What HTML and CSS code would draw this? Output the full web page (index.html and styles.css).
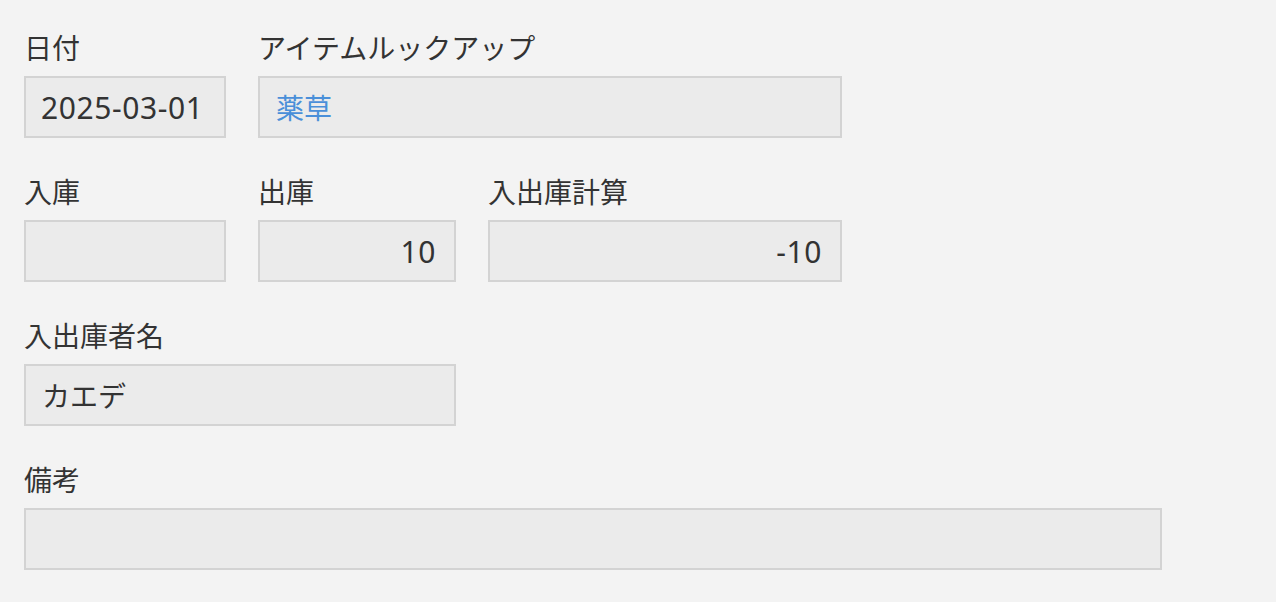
FILE: index.html
```html
<!DOCTYPE html>
<html lang="ja">
<head>
<meta charset="utf-8">
<link rel="stylesheet" href="styles.css">
</head>
<body>
<div class="form">
  <div class="row">
    <div class="field">
      <div class="label">日付</div>
      <div class="box w202 latin">2025-03-01</div>
    </div>
    <div class="field">
      <div class="label">アイテムルックアップ</div>
      <div class="box w584 link">薬草</div>
    </div>
  </div>
  <div class="row">
    <div class="field">
      <div class="label">入庫</div>
      <div class="box w202 num latin"></div>
    </div>
    <div class="field">
      <div class="label">出庫</div>
      <div class="box w198 num latin">10</div>
    </div>
    <div class="field">
      <div class="label">入出庫計算</div>
      <div class="box w354 num latin">-10</div>
    </div>
  </div>
  <div class="row">
    <div class="field">
      <div class="label">入出庫者名</div>
      <div class="box w432">カエデ</div>
    </div>
  </div>
  <div class="row">
    <div class="field">
      <div class="label">備考</div>
      <div class="box w1138"></div>
    </div>
  </div>
</div>
</body>
</html>
```

FILE: styles.css
```css
html, body {
  margin: 0;
  background: #f3f3f3;
}
body {
  font-family: "Noto Sans CJK JP", "Noto Sans", sans-serif;
  color: #333333;
}
.form {
  padding: 27px 24px 0 24px;
  display: flex;
  flex-direction: column;
  gap: 33px;
}
.row {
  display: flex;
  gap: 32px;
}
.field {
  display: flex;
  flex-direction: column;
}
.label {
  font-size: 28px;
  line-height: 40px;
  height: 40px;
  margin-bottom: 9px;
  white-space: nowrap;
}
.box {
  box-sizing: border-box;
  height: 62px;
  border: 2px solid #d3d3d3;
  background: #ebebeb;
  padding: 0 17px 0 16px;
  display: flex;
  align-items: center;
  font-size: 28px;
  white-space: nowrap;
}
.latin {
  font-family: "Noto Sans", "Noto Sans CJK JP", sans-serif;
  font-size: 30px;
  letter-spacing: 0.6px;
  padding-left: 15px;
  padding-right: 18px;
}
.num { justify-content: flex-end; }
.link { color: #4a8fd9; }
.w202 { width: 202px; }
.w198 { width: 198px; }
.w354 { width: 354px; }
.w432 { width: 432px; }
.w584 { width: 584px; }
.w1138 { width: 1138px; }
```
